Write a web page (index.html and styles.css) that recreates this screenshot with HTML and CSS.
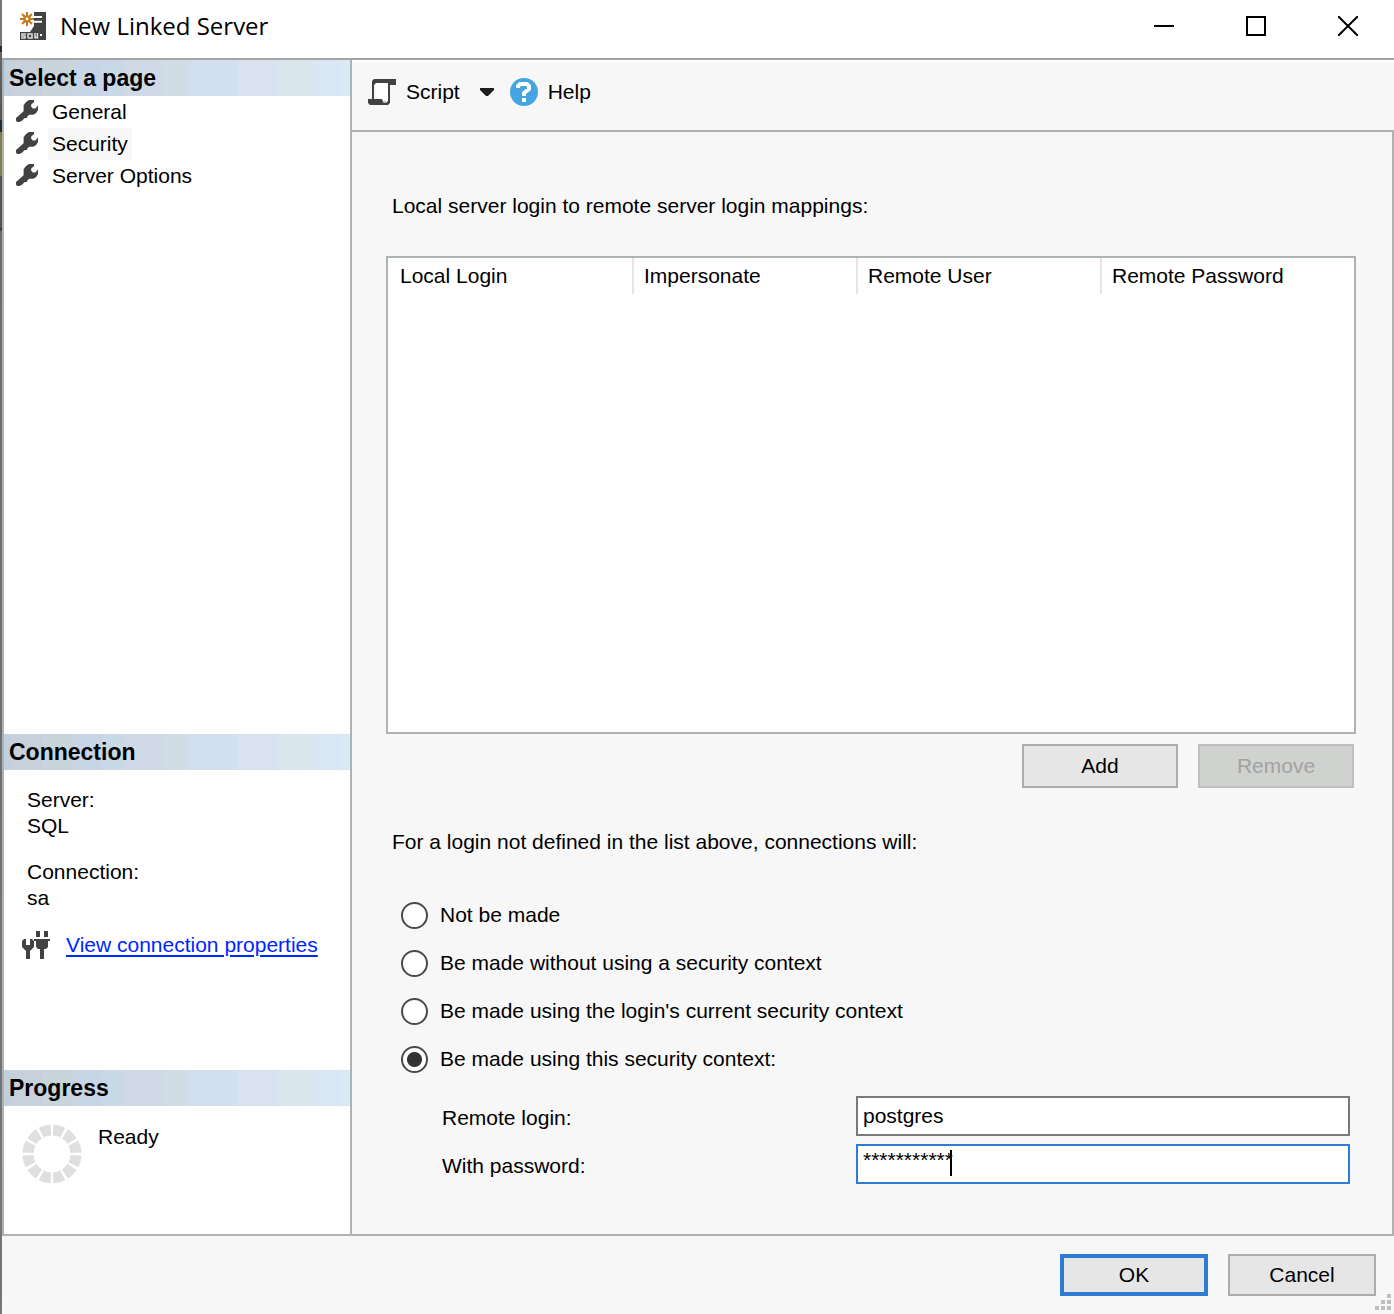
FILE: index.html
```html
<!DOCTYPE html>
<html lang="en">
<head>
	<meta charset="UTF-8">
	<title>New Linked Server</title>
	<link rel="stylesheet" href="styles.css">
</head>
<body>
	<svg class="defs" aria-hidden="true">
		<symbol id="wrench" viewBox="0 0 11 11">
			<path d="M5 1L6.5 0H9V1L7.6 2.2V3.4L8.5 4.2H9.6L11 2.8V5L10 6.6L8.6 7.4H6.6L5.6 8.2V9H4.4L3 10.4L1.8 11H.6L0 10.4V9L1.6 7.6L3.8 5.6V2.6Z"/>
		</symbol>
	</svg>
	<div class="window">
		<header class="titlebar">
			<svg class="app-icon" viewBox="0 0 13 14">
				<path fill="#424242" d="M7 0H13V14H0V10H5L7 7Z"/>
				<path fill="#fff" d="M7 2H11V3H7ZM7 4.4H11V5.4H7Z"/>
				<path fill="none" stroke="#fff" stroke-width="3" d="M3.5 0V7M0 3.5H7M1 1L6 6M6 1L1 6"/>
				<path fill="none" stroke="#c27d1f" d="M3.5 0V7M0 3.5H7M1 1L6 6M6 1L1 6"/>
				<circle cx="3.5" cy="3.5" r="1.9" fill="#c27d1f"/>
				<circle cx="3.5" cy="3.5" r=".7" fill="#fff"/>
				<path fill="none" stroke="#ddd" stroke-width=".8" d="M3 11H1V12H2.5V13H.5M4 13V11H6V13H4M7.5 10.5V12.8H8.7V10.5"/>
				<path fill="#fff" d="M10 11H11V12H10Z"/>
			</svg>
			<h1>New Linked Server</h1>
			<div class="win-btns">
				<button type="button" aria-label="Minimize"><svg viewBox="0 0 20 20"><path d="M0 10H20"/></svg></button>
				<button type="button" aria-label="Maximize"><svg viewBox="0 0 20 20"><path d="M1 1H19V19H1Z"/></svg></button>
				<button type="button" aria-label="Close"><svg viewBox="0 0 20 20"><path d="M0 0L20 20M20 0L0 20"/></svg></button>
			</div>
		</header>

		<div class="content">
			<aside class="sidebar">
				<nav class="pages">
					<h2>Select a page</h2>
					<ul>
						<li><svg class="wrench"><use href="#wrench"/></svg><a href="#general">General</a></li>
						<li><svg class="wrench"><use href="#wrench"/></svg><a href="#security" class="active">Security</a></li>
						<li><svg class="wrench"><use href="#wrench"/></svg><a href="#options">Server Options</a></li>
					</ul>
				</nav>
				<section class="connection">
					<h2>Connection</h2>
					<dl>
						<dt>Server:</dt>
						<dd>SQL</dd>
						<dt>Connection:</dt>
						<dd>sa</dd>
					</dl>
					<div class="conn-link">
						<svg viewBox="0 0 14 14">
							<path fill="#424242" d="M7 0H9V3H7ZM11 0H13V3H11ZM6 4H14V5H13V8L12 9H11V14H9V9H8L7 8V5H6Z"/>
							<path fill="#424242" d="M0 5L1 4H2V7H4V4H5L6 5V8L5 9L4 10V14H2V10L0 8Z"/>
						</svg>
						<a href="#properties">View connection properties</a>
					</div>
				</section>
				<section class="progress">
					<h2>Progress</h2>
					<div class="status">
						<svg viewBox="0 0 60 60"><circle cx="30" cy="30" r="24" pathLength="120"/></svg>
						<span>Ready</span>
					</div>
				</section>
			</aside>

			<main>
				<div class="toolbar">
					<button type="button">
						<svg class="script-icon" viewBox="0 0 14 13">
							<path fill="#fff" d="M4 2H10V11H4Z"/>
							<path fill="#424242" d="M3 0H14V3H11V12L10 13H1L0 12V10H2V1ZM4 2L3 3V10H7L8 12H9L10 11V2Z"/>
							<path fill="#bbb" d="M7 11H9V12H8Z"/>
						</svg>
						Script
					</button>
					<button type="button" class="drop" aria-label="Script options"><svg viewBox="0 0 14 8"><path d="M0 0H14V2L8 8H6L0 2Z"/></svg></button>
					<button type="button">
						<svg class="help-icon" viewBox="0 0 28 28">
							<circle cx="14" cy="14" r="14" fill="#45a5e3"/>
							<path fill="none" stroke="#fff" stroke-width="4" d="M8 10V8L10 6H17L19 8V11L14 15V18"/>
							<path fill="#fff" d="M12 20H16V24H12Z"/>
						</svg>
						Help
					</button>
				</div>

				<form class="page" autocomplete="off">
					<p id="mapLabel">Local server login to remote server login mappings:</p>
					<div class="grid">
						<table aria-labelledby="mapLabel">
							<thead>
								<tr>
									<th class="c1">Local Login</th>
									<th class="c2">Impersonate</th>
									<th class="c3">Remote User</th>
									<th>Remote Password</th>
								</tr>
							</thead>
						</table>
					</div>
					<div class="grid-btns">
						<button type="button" class="btn">Add</button>
						<button type="button" class="btn" disabled>Remove</button>
					</div>

					<p id="connLabel" class="conn-label">For a login not defined in the list above, connections will:</p>
					<div class="radios" role="radiogroup" aria-labelledby="connLabel">
						<label><input type="radio" name="context">Not be made</label>
						<label><input type="radio" name="context">Be made without using a security context</label>
						<label><input type="radio" name="context">Be made using the login's current security context</label>
						<label><input type="radio" name="context" checked>Be made using this security context:</label>
					</div>
					<div class="fields">
						<label for="login">Remote login:</label>
						<input type="text" id="login" value="postgres">
						<label for="password">With password:</label>
						<div class="pass">
							<input type="text" id="password" value="***********">
							<i class="caret"></i>
						</div>
					</div>
				</form>
			</main>
		</div>

		<footer>
			<button type="button" class="btn ok">OK</button>
			<button type="button" class="btn">Cancel</button>
			<svg class="grip" viewBox="0 0 16 16"><path d="M12 0H16V4H12ZM6 6H10V10H6ZM12 6H16V10H12ZM0 12H4V16H0ZM6 12H10V16H6ZM12 12H16V16H12Z"/></svg>
		</footer>
	</div>
</body>
</html>
```
FILE: styles.css
```css
* { box-sizing: border-box; }
body { margin: 0;font: 21px/26px "Liberation Sans", Arial, sans-serif;color: #000; }
h1, h2, p, ul, dl, dd { margin: 0;padding: 0; }
button, input { font: inherit;color: inherit;margin: 0; }
button { border: 0;padding: 0;background: none; }
svg { display: block;flex: none; }
.defs { position: absolute;width: 0;height: 0; }

.window { min-height: 100vh;display: flex;flex-direction: column;background: #f7f7f7;position: relative; }
.window::before { content: "";position: absolute;left: 0;top: 0;bottom: 0;width: 2px;background: linear-gradient(#777 46px, #222a33 46px, #222a33 52px, #666 52px, #555 120px, #222a33 120px, #222a33 132px, #857c4c 132px, #857c4c 176px, #555 176px, #555 228px, #222a33 228px, #6b6b6b 232px, #777); }

.titlebar { display: flex;align-items: center;height: 60px;padding: 0 0 6px 20px;background: #fff;border-bottom: 2px solid #a5a5a5; }
.app-icon { width: 26px;height: 28px; }
h1 { flex: 1;margin-left: 14px;font: 24px/32px "Open Sans", "Noto Sans", sans-serif; }
.win-btns { display: flex; }
.win-btns button { width: 92px;height: 40px;display: flex;align-items: center;justify-content: center; }
.win-btns svg { width: 20px;height: 20px;fill: none;stroke: #000;stroke-width: 2; }

.content { flex: 1;display: flex;border-bottom: 2px solid #adb2b5;margin-left: 2px; }
.sidebar { width: 350px;flex: none;display: flex;flex-direction: column;background: #fff;border: solid #adb2b5;border-width: 0 2px; }
h2 { height: 36px;padding-left: 5px;font-size: 23px;line-height: 36px;background: linear-gradient(90deg, #bfd0de 6px, #c8d0dc 6px, #c8d0dc 38px, #c8d5dc 38px, #c8d5dc 72px, #c8d5e6 72px, #c8d5e6 98px, #c8d8e6 98px, #c8d8e6 120px, #d0d9e6 120px, #d0d9e6 158px, #d0dde4 158px, #d0dde4 184px, #d0deee 184px, #d0deee 222px, #d0e0ee 222px, #d0e0ee 234px, #d9e2ee 234px, #d9e2ee 273px, #d9e6ec 273px, #d9e6ec 310px, #d9e6f4 310px, #d9e6f4 336px, #d9eaf6 336px); }
.pages { flex: 1; }
.pages ul { list-style: none;padding-left: 12px; }
.pages li { display: flex;height: 32px; }
.pages a { margin-left: 10px;padding: 0 4px;line-height: 32px;color: #000;text-decoration: none; }
.pages a.active { background: #f7f7f7; }
.wrench { width: 22px;height: 22px;margin-top: 4px;fill: #424242; }

.connection { height: 336px; }
.connection dl { padding: 17px 0 0 23px; }
.connection dd { margin-bottom: 20px; }
.conn-link { display: flex;align-items: center;padding-left: 18px;gap: 16px; }
.conn-link svg { width: 28px;height: 28px; }
.conn-link a { color: #0026ff;text-decoration-thickness: 2px;text-underline-offset: 3px; }
.progress { height: 164px; }
.status { display: flex;gap: 16px;padding: 18px; }
.status svg { width: 60px;height: 60px; }
.status circle { fill: none;stroke: #dfdfdf;stroke-width: 11;stroke-dasharray: 8 2;stroke-dashoffset: -1; }

main { flex: 1;display: flex;flex-direction: column; }
.toolbar { display: flex;align-items: center;height: 72px;padding: 0 16px 8px;border-top: 2px solid #fff;border-bottom: 2px solid #adb2b5; }
.toolbar button { display: flex;align-items: center;gap: 10px; }
.script-icon { width: 28px;height: 26px; }
.toolbar .drop { margin: 0 16px 0 20px; }
.drop svg { width: 14px;height: 8px;fill: #1e1e1e; }
.help-icon { width: 28px;height: 28px; }

.page { flex: 1;display: flex;flex-direction: column;padding: 60px 36px 50px 34px;border-right: 2px solid #adb2b5; }
.page p { padding-left: 6px;line-height: 28px; }
.grid { flex: 1;min-height: 200px;margin-top: 36px;background: #fff;border: 2px solid #adb2b5; }
table { width: 100%;table-layout: fixed;border-collapse: separate;border-spacing: 0; }
th { height: 36px;padding: 0 0 0 10px;font-weight: normal;text-align: left;border-right: 2px solid #e5e5e5; }
th:first-child { padding-left: 12px; }
th:last-child { border-right: 0; }
.c1 { width: 246px; }
.c2 { width: 224px; }
.c3 { width: 244px; }
.grid-btns { display: flex;justify-content: flex-end;gap: 20px;margin: 10px 2px 0 0; }
.btn { width: 156px;height: 44px;background: #e6e6e6;border: 2px solid #adadad; }
.btn:disabled { color: #a2a2a2;background: #d0d2cf;border-color: #bfbfbf; }
.page .conn-label { margin-top: 40px; }
.radios { margin: 35px 0 13px 15px; }
.radios label { display: flex;align-items: center;gap: 12px;height: 48px; }
.radios input { appearance: none;width: 27px;height: 27px;background: #fff;border: 2px solid #4a4a4a;border-radius: 50%; }
.radios input:checked { background: radial-gradient(circle, #333 7px, #fff 8px); }
.fields { display: grid;grid-template-columns: 414px 1fr;gap: 8px 0;padding: 0 6px 0 56px;align-items: center; }
.fields label { padding-top: 4px; }
.fields input { width: 100%;height: 40px;padding: 0 5px;background: #fff;border: 2px solid #7a7a7a;border-radius: 0;outline: 0; }
.pass { position: relative; }
.fields .pass input { display: block;padding-bottom: 8px;border-color: #2d7dd2; }
.caret { position: absolute;left: 94px;top: 6px;width: 2px;height: 26px;background: #000; }

footer { display: flex;justify-content: flex-end;gap: 20px;padding: 18px;position: relative; }
footer .btn { width: 148px;height: 42px; }
footer .ok { border: 4px solid #2d7dd2; }
.grip { position: absolute;right: 3px;bottom: 4px;width: 16px;height: 16px;fill: #bfbfbf; }
```
